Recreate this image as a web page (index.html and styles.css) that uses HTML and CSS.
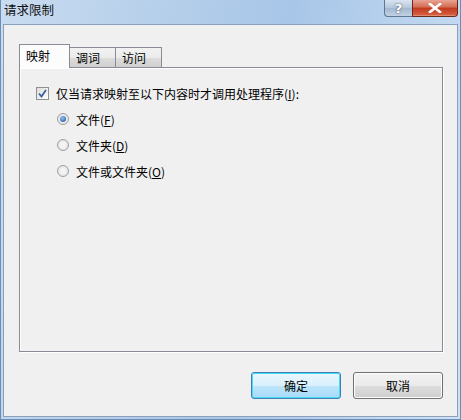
FILE: index.html
```html
<!DOCTYPE html>
<html lang="zh-CN">
<head>
<meta charset="utf-8">
<title>请求限制</title>
<link rel="stylesheet" href="styles.css">
</head>
<body>
<div class="window">
  <div class="titlebar">
    <div class="title">请求限制</div>
    <div class="caption-buttons">
      <div class="cap-btn help">?</div>
      <div class="cap-btn close">
        <svg width="14" height="10" viewBox="0 0 14 10"><path d="M2 1 L12 9 M12 1 L2 9" stroke="#fff" stroke-width="2.6" stroke-linecap="square"/></svg>
      </div>
    </div>
  </div>
  <div class="client">
    <div class="tabs">
      <div class="tab active">映射</div>
      <div class="tab">调词</div>
      <div class="tab">访问</div>
    </div>
    <div class="panel">
      <label class="row check-row">
        <span class="checkbox">
          <svg width="9" height="9" viewBox="0 0 9 9"><path d="M1 4.5 L3.5 7.5 L8 1" fill="none" stroke="#3a5f9e" stroke-width="1.8"/></svg>
        </span>
        <span>仅当请求映射至以下内容时才调用处理程序(<u>I</u>):</span>
      </label>
      <div class="radios">
        <label class="row radio-row"><span class="radio checked"><span class="dot"></span></span><span>文件(<u>F</u>)</span></label>
        <label class="row radio-row"><span class="radio"></span><span>文件夹(<u>D</u>)</span></label>
        <label class="row radio-row"><span class="radio"></span><span>文件或文件夹(<u>O</u>)</span></label>
      </div>
    </div>
    <div class="buttons">
      <div class="btn default">确定</div>
      <div class="btn">取消</div>
    </div>
  </div>
</div>
</body>
</html>
```
FILE: styles.css
```css
html, body {
  margin: 0;
  padding: 0;
}
body {
  width: 461px;
  height: 420px;
  overflow: hidden;
  font-family: "Noto Sans CJK SC", "Microsoft YaHei", sans-serif;
  font-size: 12px;
  color: #000;
}
.window {
  width: 461px;
  height: 420px;
  box-sizing: border-box;
  display: flex;
  flex-direction: column;
  background: linear-gradient(100deg, #c9dcf1 0%, #b6cfea 30%, #a8c6e8 55%, #bcd5ef 80%, #cfe1f4 100%);
  border-left: 1px solid #6d8db5;
  border-right: 1px solid #6d8db5;
  border-bottom: 1px solid #6d8db5;
}
.titlebar {
  height: 24px;
  display: flex;
  justify-content: space-between;
  align-items: flex-start;
  flex-shrink: 0;
}
.title {
  padding-left: 3px;
  line-height: 20px;
  margin-top: 0;
  font-size: 12.5px;
  color: #111;
}
.caption-buttons {
  display: flex;
  margin-right: 2px;
}
.cap-btn {
  height: 17px;
  box-sizing: border-box;
  display: flex;
  align-items: center;
  justify-content: center;
  border: 1px solid #5f7590;
  border-top: none;
}
.help {
  width: 28px;
  border-right: none;
  border-radius: 0 0 0 4px;
  background: linear-gradient(#d9e4f1, #b5c6db 50%, #a3b7cf 51%, #c2d2e4);
  color: #fff;
  font-family: "DejaVu Sans", sans-serif;
  font-weight: bold;
  font-size: 13px;
  text-shadow: 0 0 2px #334;
}
.close {
  width: 46px;
  border-radius: 0 0 4px 0;
  background: linear-gradient(#e8a493, #d46a52 45%, #c2391e 50%, #d45a3c 90%, #e79b83);
  border-color: #6b2a1e;
}
.client {
  flex: 1;
  margin: 0 2px 2px 2px;
  background: #f0f0f0;
  border: 1px solid #8aa0bc;
  display: flex;
  flex-direction: column;
  padding: 19px 14px 0 15px;
}
.tabs {
  display: flex;
  align-items: flex-end;
  height: 23px;
  position: relative;
  z-index: 1;
}
.tab {
  height: 20px;
  box-sizing: border-box;
  padding: 0 6px;
  width: 46px;
  border: 1px solid #898c95;
  border-bottom: none;
  border-left: none;
  background: linear-gradient(#f2f2f2, #ebebeb 50%, #dddddd 51%, #cfcfcf);
  line-height: 19px;
}
.tab.active {
  width: 51px;
  height: 24px;
  border-left: 1px solid #898c95;
  background: #fcfcfc;
  line-height: 22px;
  padding-left: 6px;
  margin-bottom: -1px;
}
.panel {
  height: 285px;
  box-sizing: border-box;
  background: #f0f0f0;
  border: 1px solid #898c95;
  box-shadow: inset 1px 1px 0 #fff, 1px 1px 0 #fff;
  padding: 18px 0 0 16px;
}
.row {
  display: flex;
  align-items: center;
  height: 14px;
}
.check-row {
  gap: 7px;
}
.checkbox {
  width: 13px;
  height: 13px;
  box-sizing: border-box;
  border: 1px solid #8e8f8f;
  background: linear-gradient(135deg, #dcdcdc, #fdfdfd);
  display: flex;
  align-items: center;
  justify-content: center;
}
.radios {
  display: flex;
  flex-direction: column;
  gap: 12px;
  padding: 12px 0 0 21px;
}
.radio-row {
  gap: 7px;
}
.radio {
  width: 12px;
  height: 12px;
  box-sizing: border-box;
  border-radius: 50%;
  border: 1px solid #a0a0a0;
  background: radial-gradient(circle at 50% 50%, #f4f4f4 30%, #dadada 100%);
  display: flex;
  align-items: center;
  justify-content: center;
}
.radio .dot {
  width: 6px;
  height: 6px;
  border-radius: 50%;
  background: radial-gradient(circle at 40% 35%, #9cc3f0, #2a5fb0 80%);
}
.buttons {
  display: flex;
  justify-content: flex-end;
  gap: 12px;
  margin-top: 20px;
}
.btn {
  width: 90px;
  height: 27px;
  box-sizing: border-box;
  border: 1px solid #707070;
  border-radius: 3px;
  background: linear-gradient(#f2f2f2, #ebebeb 50%, #dddddd 51%, #cfcfcf);
  box-shadow: inset 0 0 0 1px #fcfcfc;
  display: flex;
  align-items: center;
  justify-content: center;
}
.btn.default {
  border-color: #3c7fb1;
  box-shadow: inset 0 0 0 1px #48dbfa;
  background: linear-gradient(#eaf6fd, #d9f0fc 50%, #bee6fd 51%, #a7d9f5);
}
```
